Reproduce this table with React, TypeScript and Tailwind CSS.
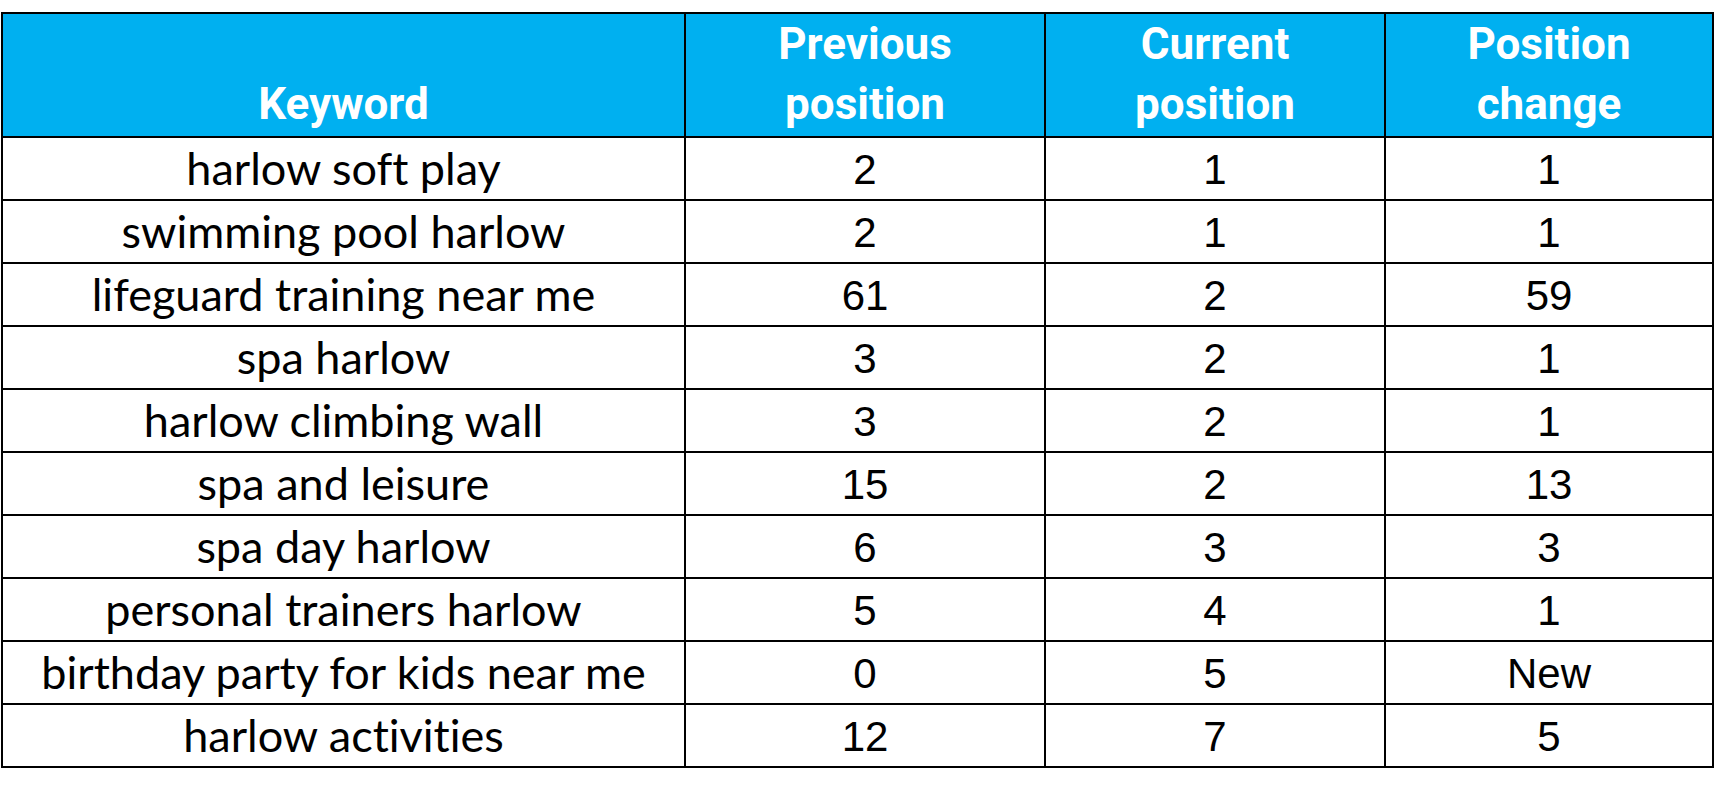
const rows: [string, string, string, string][] = [
  ['harlow soft play', '2', '1', '1'],
  ['swimming pool harlow', '2', '1', '1'],
  ['lifeguard training near me', '61', '2', '59'],
  ['spa harlow', '3', '2', '1'],
  ['harlow climbing wall', '3', '2', '1'],
  ['spa and leisure', '15', '2', '13'],
  ['spa day harlow', '6', '3', '3'],
  ['personal trainers harlow', '5', '4', '1'],
  ['birthday party for kids near me', '0', '5', 'New'],
  ['harlow activities', '12', '7', '5'],
];

const headers = [
  ['Keyword'],
  ['Previous', 'position'],
  ['Current', 'position'],
  ['Position', 'change'],
];

export default function App() {
  return (
    <div className="min-h-screen bg-white pt-3 pl-px">
      <table className="table-fixed border-collapse w-[1711px] text-black">
        <colgroup>
          <col className="w-[683px]" />
          <col className="w-[360px]" />
          <col className="w-[340px]" />
          <col className="w-[328px]" />
        </colgroup>
        <thead>
          <tr className="h-[123px] bg-[#00b0f0]">
            {headers.map((lines, i) => (
              <th
                key={i}
                className="border-2 border-black align-bottom p-0 pb-[2px] text-center text-white font-bold text-[44px] leading-[60px] font-['Roboto',sans-serif]"
              >
                {lines.map((l) => (
                  <div key={l}>{l}</div>
                ))}
              </th>
            ))}
          </tr>
        </thead>
        <tbody>
          {rows.map((row, r) => (
            <tr key={r} className="h-[63px]">
              <td className="border-2 border-black p-0 text-center align-middle text-[45px] leading-none [font-variant-ligatures:none] font-['Lato',sans-serif]">
                {row[0]}
              </td>
              {row.slice(1).map((v, c) => (
                <td
                  key={c}
                  className="border-2 border-black p-0 pt-[3px] text-center align-middle text-[42px] leading-none font-['Liberation_Sans',Arial,sans-serif]"
                >
                  {v}
                </td>
              ))}
            </tr>
          ))}
        </tbody>
      </table>
    </div>
  );
}
